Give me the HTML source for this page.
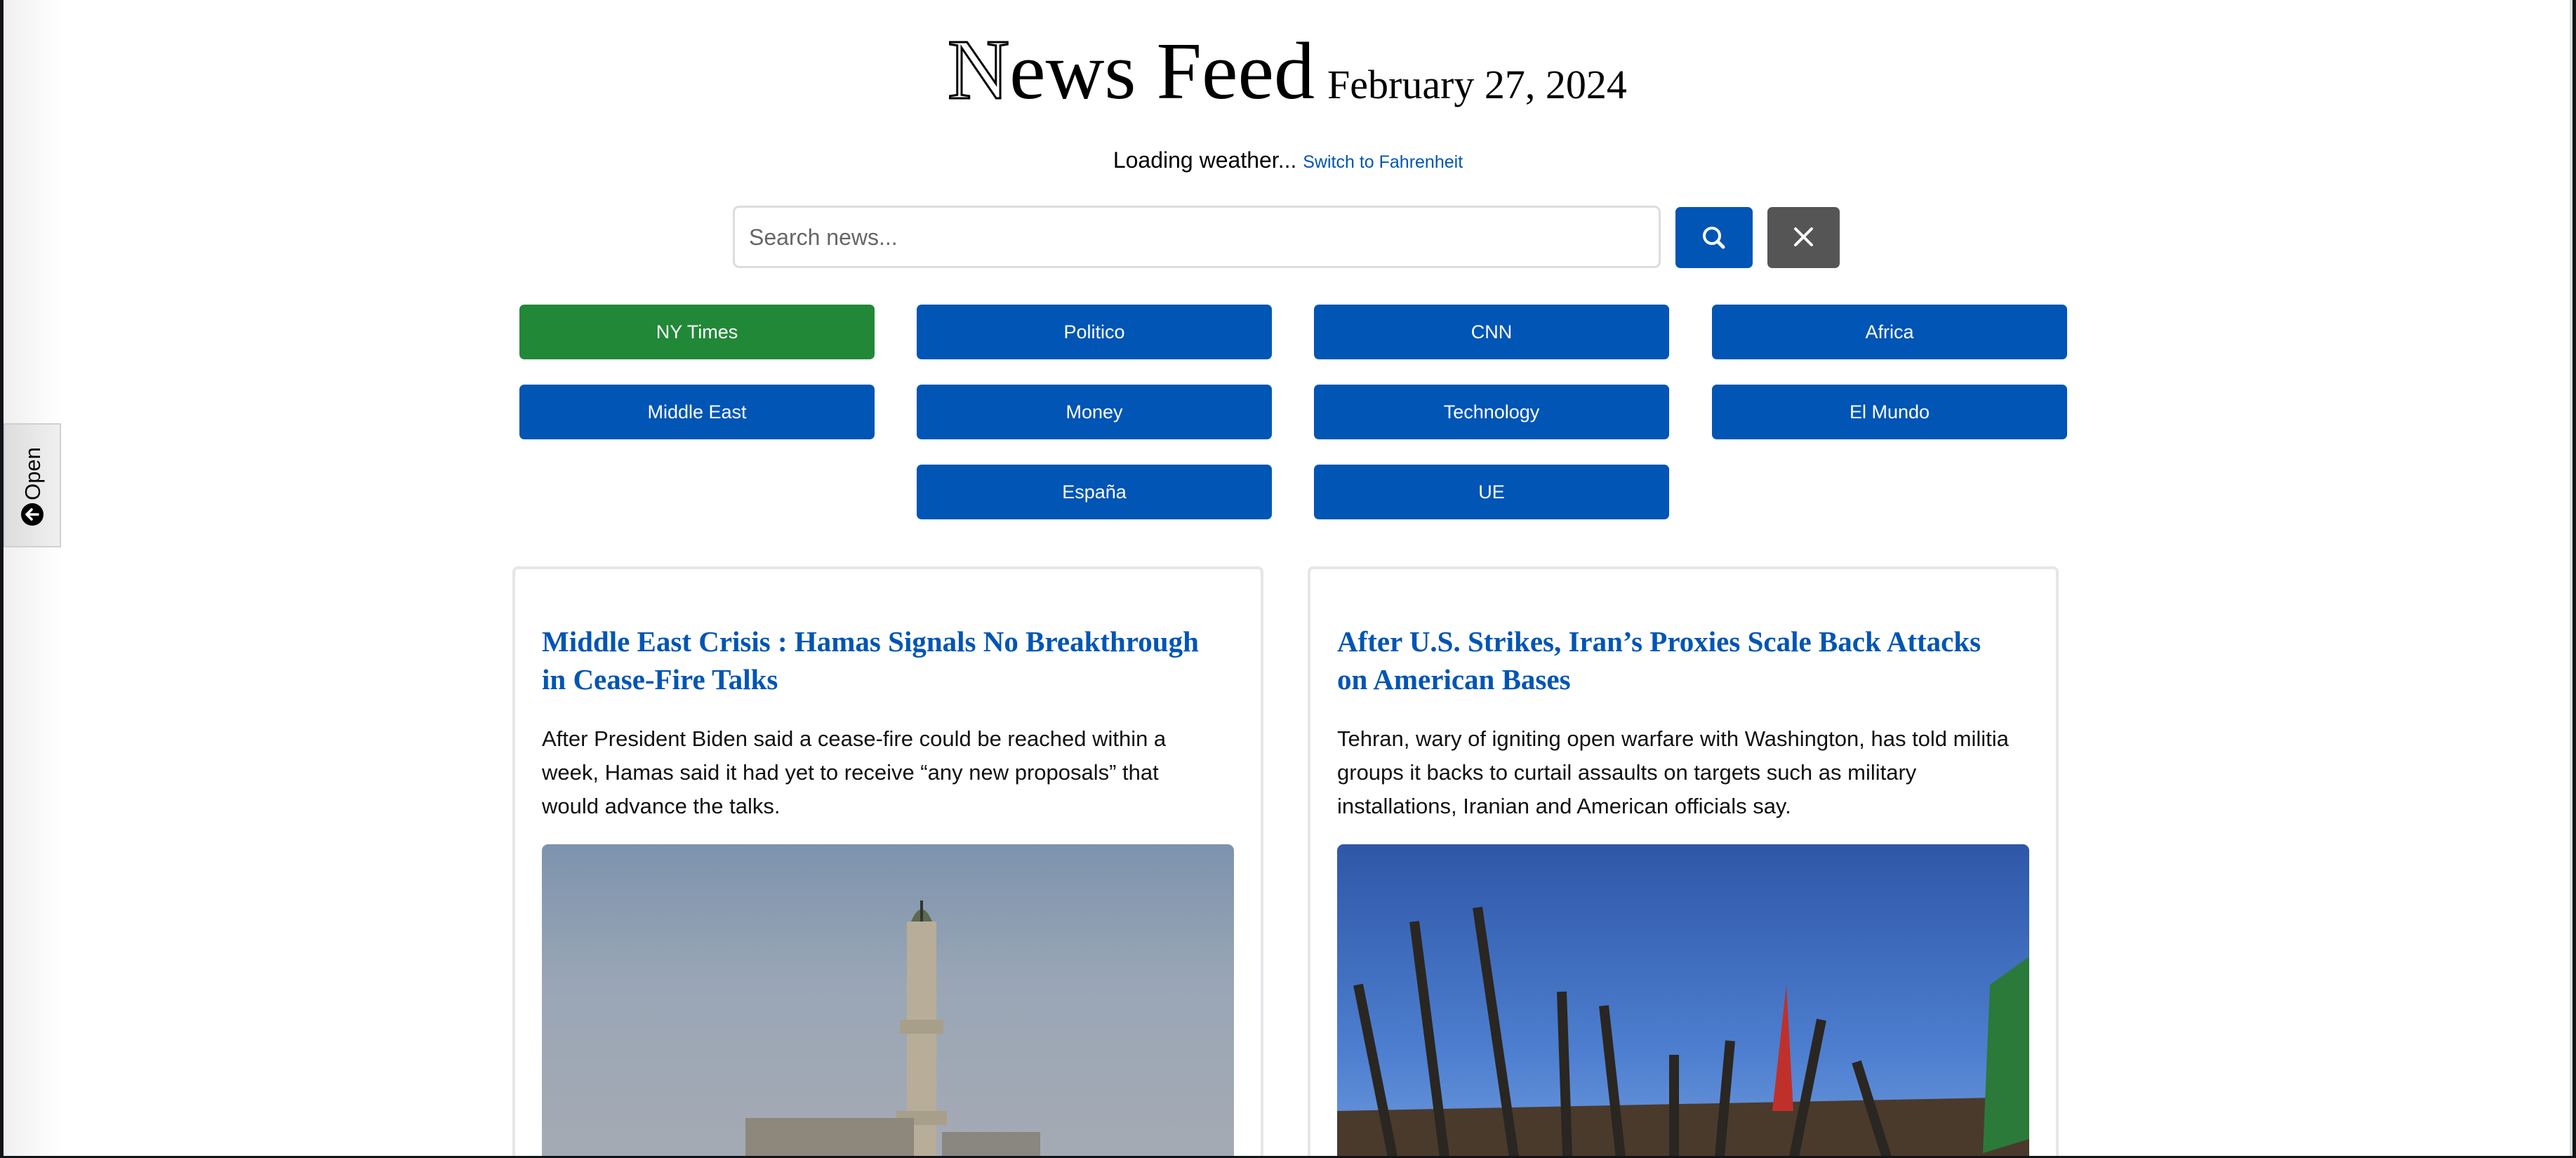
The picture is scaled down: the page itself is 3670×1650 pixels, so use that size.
<!DOCTYPE html>
<html><head><meta charset="utf-8"><style>
*{margin:0;padding:0;box-sizing:border-box}
html,body{width:3670px;height:1650px;overflow:hidden;background:#fff;font-family:"Liberation Sans",sans-serif;position:relative}
.a{position:absolute}
.btn{position:absolute;height:78px;width:506px;background:#0055b5;color:#fff;border-radius:7px;font-size:27px;display:flex;align-items:center;justify-content:center}
.card{position:absolute;top:807px;width:1070px;height:860px;border:4px solid #e6e6e6;border-radius:8px;background:#fff;overflow:hidden}
.card h2{position:absolute;left:38px;top:76px;width:960px;font-family:"Liberation Serif",serif;font-weight:bold;color:#0055b5;font-size:41px;line-height:54px}
.card p{position:absolute;left:38px;top:218px;width:960px;font-size:31px;line-height:48px;color:#111}
.img{position:absolute;left:38px;top:392px;width:986px;height:500px;border-radius:9px;overflow:hidden}
</style></head><body>
<div class="a" style="left:0;top:0;width:90px;height:1650px;background:linear-gradient(90deg,#efefef,#fff)"></div>
<div class="a" style="left:0;top:0;width:5px;height:1650px;background:#111518"></div>

<div class="a" style="left:1350px;top:30px;white-space:nowrap;font-family:'Liberation Serif',serif">
<span style="font-size:122px;color:#fff;-webkit-text-stroke:3px #000">N</span><span style="font-size:116px;color:#000">ews Feed</span>
<span style="font-size:58px;color:#000;margin-left:14px">February 27, 2024</span></div>

<div class="a" style="left:0;width:3670px;top:210px;text-align:center;font-size:32px;color:#000">Loading weather... <span style="font-size:25px;color:#0055b5">Switch to Fahrenheit</span></div>

<div class="a" style="left:1044px;top:293px;width:1322px;height:89px;border:3px solid #ddd;border-radius:9px;font-size:32px;color:#666;padding:24px 0 0 20px">Search news...</div>
<div class="a" style="left:2387px;top:295px;width:110px;height:87px;background:#0055b5;border-radius:7px">
<svg width="110" height="87" viewBox="0 0 110 87"><circle cx="52" cy="41" r="11" fill="none" stroke="#fff" stroke-width="4"/><line x1="60" y1="49" x2="68" y2="57" stroke="#fff" stroke-width="5" stroke-linecap="round"/></svg></div>
<div class="a" style="left:2518px;top:295px;width:103px;height:87px;background:#555;border-radius:7px">
<svg width="103" height="87" viewBox="0 0 103 87"><path d="M40 31L63 54M63 31L40 54" stroke="#fff" stroke-width="4" stroke-linecap="round"/></svg></div>

<div class="btn" style="left:740px;top:434px;background:#218838">NY Times</div>
<div class="btn" style="left:1306px;top:434px">Politico</div>
<div class="btn" style="left:1872px;top:434px">CNN</div>
<div class="btn" style="left:2439px;top:434px">Africa</div>
<div class="btn" style="left:740px;top:548px">Middle East</div>
<div class="btn" style="left:1306px;top:548px">Money</div>
<div class="btn" style="left:1872px;top:548px">Technology</div>
<div class="btn" style="left:2439px;top:548px">El Mundo</div>
<div class="btn" style="left:1306px;top:662px">España</div>
<div class="btn" style="left:1872px;top:662px">UE</div>

<div class="a" style="left:5px;top:603px;width:82px;height:177px;background:linear-gradient(90deg,#ddd,#f0f0f0);border:2px solid #d0d0d0">
<div class="a" style="left:40px;top:70px;transform:translate(-50%,-50%) rotate(-90deg);font-size:31px;white-space:nowrap">Open</div>
<svg class="a" style="left:22px;top:111px" width="34" height="34" viewBox="0 0 34 34"><circle cx="17" cy="17" r="16" fill="#000"/><path d="M25 17H10M16 10L9 17L16 24" stroke="#fff" stroke-width="3.5" fill="none" stroke-linecap="round" stroke-linejoin="round"/></svg>
</div>

<div class="card" style="left:730px">
<h2>Middle East Crisis : Hamas Signals No Breakthrough in Cease-Fire Talks</h2>
<p>After President Biden said a cease-fire could be reached within a week, Hamas said it had yet to receive “any new proposals” that would advance the talks.</p>
<div class="img" style="background:linear-gradient(180deg,#7d93ad 0%,#9aa6b6 40%,#a7abb3 100%)">
<svg width="986" height="500" viewBox="0 0 986 500"><rect x="520" y="110" width="42" height="400" fill="#b8ad98"/><rect x="510" y="250" width="62" height="20" fill="#a89f8a"/><rect x="505" y="380" width="72" height="20" fill="#a89f8a"/><path d="M526 110Q541 75 556 110Z" fill="#5a6a50"/><rect x="539" y="80" width="4" height="30" fill="#333"/><rect x="290" y="390" width="240" height="120" fill="#8d877c"/><rect x="570" y="410" width="140" height="100" fill="#8a8680"/></svg></div>
</div>

<div class="card" style="left:1863px">
<h2>After U.S. Strikes, Iran’s Proxies Scale Back Attacks on American Bases</h2>
<p>Tehran, wary of igniting open warfare with Washington, has told militia groups it backs to curtail assaults on targets such as military installations, Iranian and American officials say.</p>
<div class="img" style="background:linear-gradient(180deg,#2f57a8 0%,#4e7fd0 60%,#7aa3e0 100%)">
<svg width="986" height="500" viewBox="0 0 986 500"><path d="M0 380L986 360L986 500L0 500Z" fill="#4a3a2c"/><g stroke="#2a2622" stroke-width="14"><line x1="30" y1="200" x2="90" y2="500"/><line x1="110" y1="110" x2="160" y2="500"/><line x1="200" y1="90" x2="260" y2="500"/><line x1="320" y1="210" x2="330" y2="500"/><line x1="380" y1="230" x2="410" y2="500"/><line x1="480" y1="300" x2="480" y2="500"/><line x1="560" y1="280" x2="540" y2="500"/><line x1="690" y1="250" x2="640" y2="500"/><line x1="740" y1="310" x2="800" y2="500"/></g><path d="M930 200L986 160L986 420L920 440Z" fill="#2b7a3a"/><path d="M640 200L650 380L620 380Z" fill="#c0302a"/></svg></div>
</div>

<div class="a" style="left:3661px;top:0;width:4px;height:1650px;background:#ddd"></div>
<div class="a" style="left:3665px;top:0;width:5px;height:1650px;background:#111518"></div>
<div class="a" style="left:0;top:1647px;width:3670px;height:3px;background:#111518"></div>
</body></html>
